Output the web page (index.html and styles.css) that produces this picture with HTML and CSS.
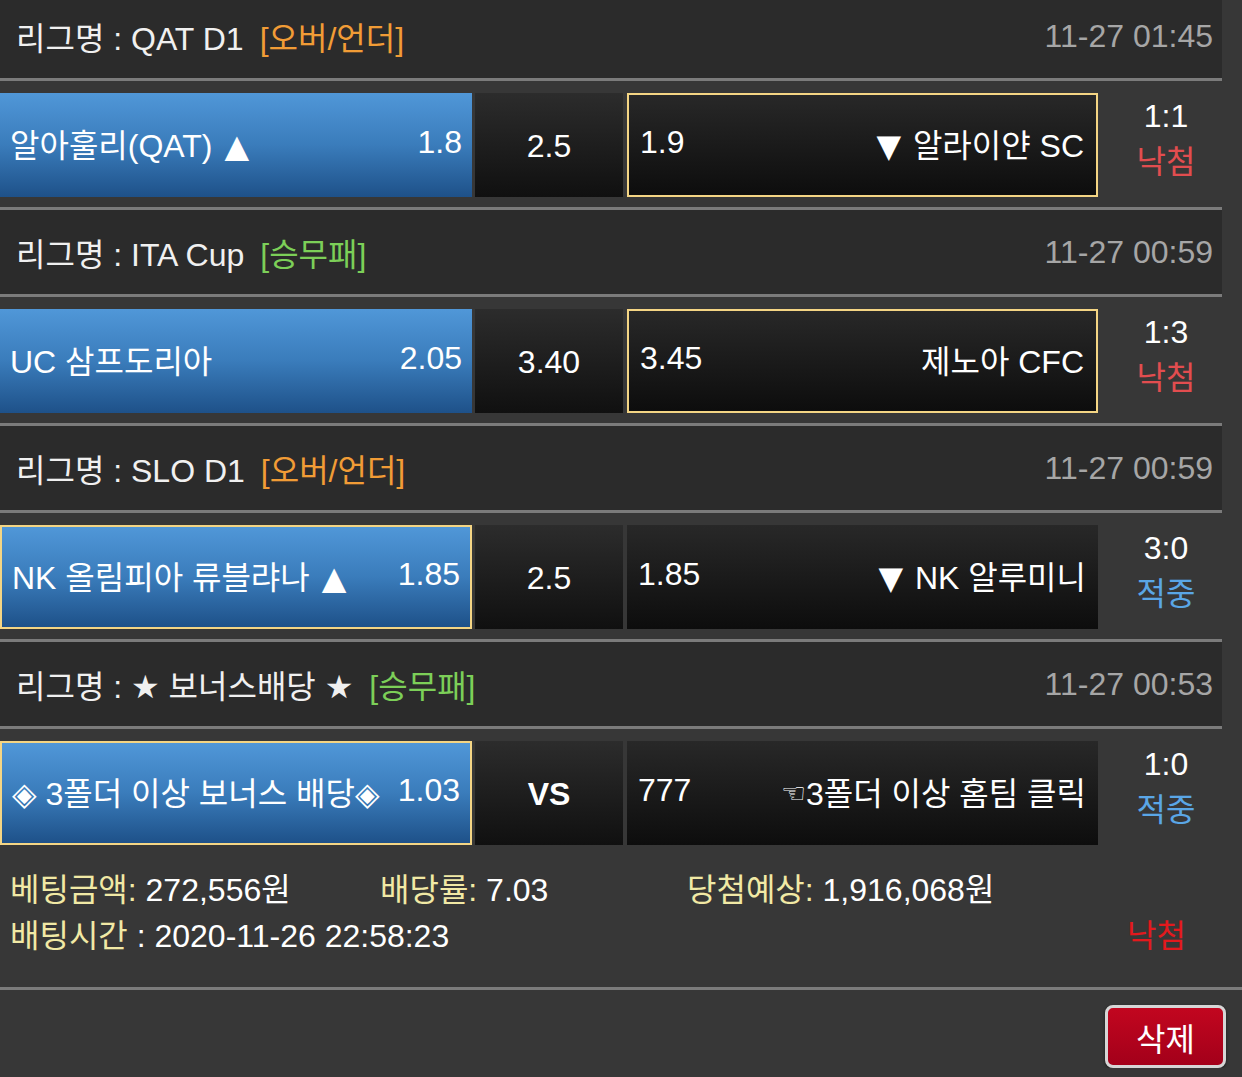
FILE: index.html
```html
<!DOCTYPE html>
<html lang="ko">
<head>
    <meta charset="UTF-8">
    <meta name="viewport" content="width=device-width, initial-scale=1.0">
    <title>배팅내역</title>
    <link rel="stylesheet" href="styles.css">
</head>
<body>
    <div class="bets">
        <div class="match">
            <div class="league">
                <div class="league-name">리그명 : QAT D1<span class="type type-ou">[오버/언더]</span></div>
                <div class="league-time">11-27 01:45</div>
            </div>
            <div class="pick-row">
                <div class="pick pick-home"><span>알아훌리(QAT) <span class="sym arrow">▲</span></span><span>1.8</span></div>
                <div class="pick pick-mid">2.5</div>
                <div class="pick pick-away selected"><span>1.9</span><span><span class="sym arrow">▼</span> 알라이얀 SC</span></div>
                <div class="score"><div>1:1</div><div class="lose">낙첨</div></div>
            </div>
        </div>
        <div class="match">
            <div class="league">
                <div class="league-name">리그명 : ITA Cup<span class="type type-wdl">[승무패]</span></div>
                <div class="league-time">11-27 00:59</div>
            </div>
            <div class="pick-row">
                <div class="pick pick-home"><span>UC 삼프도리아</span><span>2.05</span></div>
                <div class="pick pick-mid">3.40</div>
                <div class="pick pick-away selected"><span>3.45</span><span>제노아 CFC</span></div>
                <div class="score"><div>1:3</div><div class="lose">낙첨</div></div>
            </div>
        </div>
        <div class="match">
            <div class="league">
                <div class="league-name">리그명 : SLO D1<span class="type type-ou">[오버/언더]</span></div>
                <div class="league-time">11-27 00:59</div>
            </div>
            <div class="pick-row">
                <div class="pick pick-home selected"><span>NK 올림피아 류블랴나 <span class="sym arrow">▲</span></span><span>1.85</span></div>
                <div class="pick pick-mid">2.5</div>
                <div class="pick pick-away"><span>1.85</span><span><span class="sym arrow">▼</span> NK 알루미니</span></div>
                <div class="score"><div>3:0</div><div class="win">적중</div></div>
            </div>
        </div>
        <div class="match">
            <div class="league">
                <div class="league-name">리그명 : <span class="sym">★</span> 보너스배당 <span class="sym">★</span><span class="type type-wdl">[승무패]</span></div>
                <div class="league-time">11-27 00:53</div>
            </div>
            <div class="pick-row">
                <div class="pick pick-home selected"><span><span class="sym">◈</span> 3폴더 이상 보너스 배당<span class="sym">◈</span></span><span>1.03</span></div>
                <div class="pick pick-mid vs">VS</div>
                <div class="pick pick-away"><span>777</span><span><span class="hand">☜</span>3폴더 이상 홈팀 클릭</span></div>
                <div class="score"><div>1:0</div><div class="win">적중</div></div>
            </div>
        </div>
    </div>
    <div class="summary">
        <div class="summary-line">
            <div class="summary-item"><span class="label">베팅금액:</span> 272,556원</div>
            <div class="summary-item"><span class="label">배당률:</span> 7.03</div>
            <div class="summary-item"><span class="label">당첨예상:</span> 1,916,068원</div>
        </div>
        <div class="summary-line summary-last">
            <div class="summary-item"><span class="label">배팅시간</span> : 2020-11-26 22:58:23</div>
            <div class="summary-result">낙첨</div>
        </div>
    </div>
    <div class="actions">
        <div class="delete-button">삭제</div>
    </div>
</body>
</html>
```

FILE: styles.css
```css
body {
    margin: 0;
    background: #373737;
    color: #fff;
    font-family: "Liberation Sans", "Noto Sans CJK KR", sans-serif;
    font-size: 32px;
    overflow: hidden;
}
.bets {
    width: 1222px;
    margin-top: -9px;
}
.match {
    border-top: 3px solid #7b7b7b;
}
.league {
    height: 84px;
    display: flex;
    align-items: center;
    justify-content: space-between;
    padding: 0 9px 0 16px;
    background: #2b2b2b;
    border-bottom: 3px solid #7b7b7b;
}
.league-name {
    color: #f0f0f0;
}
.type {
    margin-left: 16px;
}
.type-ou {
    color: #f19c36;
}
.type-wdl {
    color: #7ccf58;
}
.league-time {
    color: #a6a6a6;
}
.sym {
    font-family: "DejaVu Sans", sans-serif;
}
.arrow {
    margin: 0 3px;
}
.pick-row {
    display: flex;
    height: 104px;
    margin: 12px 0 10px;
}
.pick {
    box-sizing: border-box;
    height: 104px;
    display: flex;
    align-items: center;
    justify-content: space-between;
    white-space: nowrap;
    padding-bottom: 5px;
}
.pick-home {
    width: 472px;
    padding-left: 10px;
    padding-right: 10px;
    background: linear-gradient(#5097d8, #3a7cbb 50%, #1e5189);
}
.pick-mid {
    width: 148px;
    margin-left: 3px;
    justify-content: center;
    padding-bottom: 0;
    padding-top: 2px;
    background: linear-gradient(#2c2c2c, #101010);
}
.pick-mid.vs {
    font-weight: bold;
}
.pick-away {
    width: 471px;
    margin-left: 4px;
    padding-left: 11px;
    padding-right: 12px;
    background: linear-gradient(#282828, #0d0d0d);
}
.pick.selected {
    border: 2px solid #f4d584;
}
.hand {
    font-family: "DejaVu Sans", sans-serif;
    font-size: 28px;
    vertical-align: 2px;
}
.score {
    flex: 1;
    display: flex;
    flex-direction: column;
    justify-content: center;
    align-items: center;
    padding: 0 0 12px 12px;
    line-height: 46px;
}
.lose {
    color: #e24d4f;
}
.win {
    color: #5aa6e6;
}
.summary {
    padding: 12px 56px 28px 10px;
    border-bottom: 3px solid #7b7b7b;
    line-height: 46px;
}
.summary-line {
    display: grid;
    grid-template-columns: 370px 307px auto;
}
.summary-last {
    display: flex;
    justify-content: space-between;
}
.label {
    color: #f1e9a5;
}
.summary-result {
    color: #e3191d;
}
.actions {
    display: flex;
    justify-content: flex-end;
    padding: 15px 16px 0 0;
}
.delete-button {
    box-sizing: border-box;
    width: 121px;
    height: 63px;
    display: flex;
    align-items: center;
    justify-content: center;
    background: linear-gradient(#c2061f, #a3001a);
    border: 3px solid #d6d6d6;
    border-radius: 8px;
    box-shadow: 0 1px 3px rgba(0, 0, 0, 0.5);
    color: #fff;
    cursor: pointer;
}
```
